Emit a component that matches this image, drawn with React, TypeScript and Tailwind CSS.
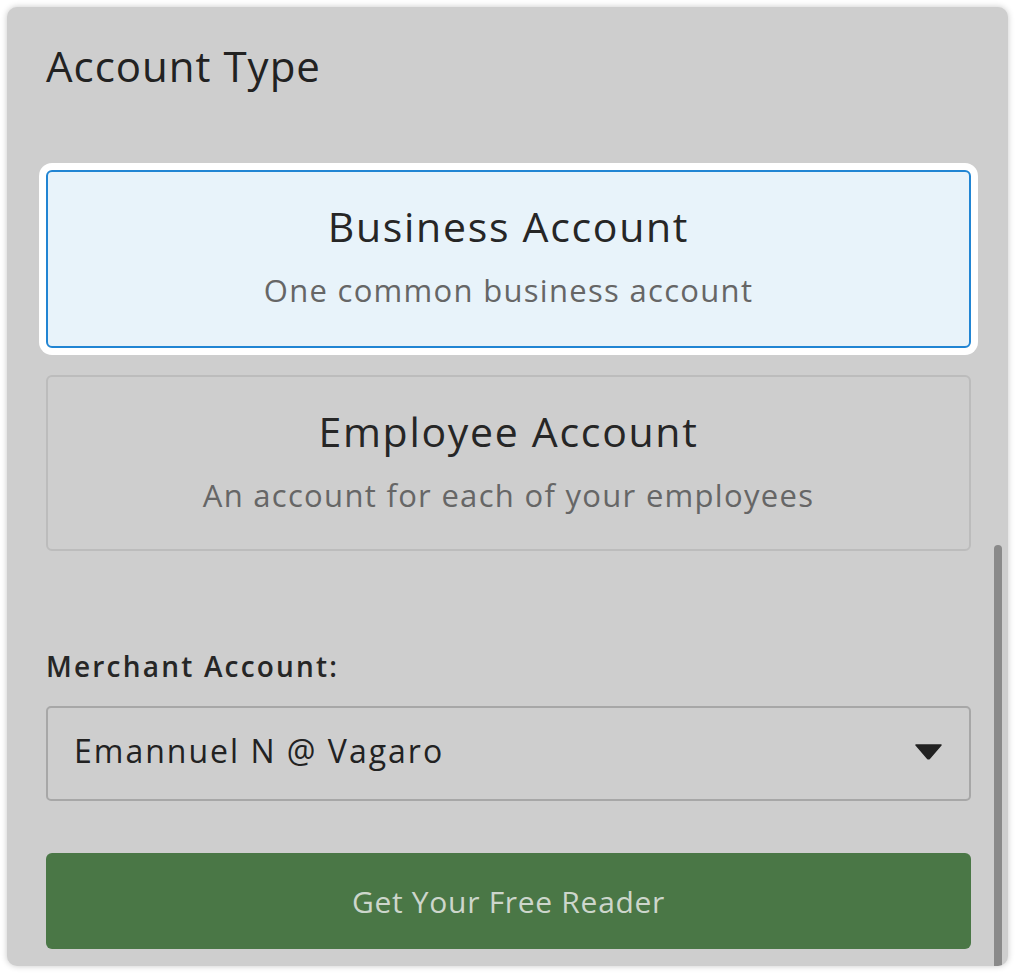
import { useState } from 'react';

const font = { fontFamily: '"Open Sans", Lato, sans-serif' };

type AccountOption = {
  id: string;
  title: string;
  subtitle: string;
};

const options: AccountOption[] = [
  { id: 'business', title: 'Business Account', subtitle: 'One common business account' },
  { id: 'employee', title: 'Employee Account', subtitle: 'An account for each of your employees' },
];

function OptionCard({
  option,
  selected,
  onSelect,
}: {
  option: AccountOption;
  selected: boolean;
  onSelect: () => void;
}) {
  return (
    <button
      onClick={onSelect}
      className={`flex w-full flex-col items-center rounded-[6px] border-2 pt-[29px] text-center ${
        selected
          ? 'h-[178px] border-[#2185d3] bg-[#e8f3fa] shadow-[0_0_0_7px_#ffffff]'
          : 'h-[176px] border-[#bcbcbc] bg-transparent'
      }`}
    >
      <span className="text-[41px] leading-[50px] tracking-[1.7px] text-[#262626]">{option.title}</span>
      <span className="mt-[19px] text-[31px] leading-[40px] tracking-[1.3px] text-[#666666]">
        {option.subtitle}
      </span>
    </button>
  );
}

export default function App() {
  const [selected, setSelected] = useState('business');

  return (
    <div className="min-h-[974px] bg-white p-[7px]" style={font}>
      <div className="relative h-[959px] overflow-hidden rounded-[10px] bg-[#cecece] pl-[39px] pr-[37px] pt-[33px] shadow-[0_0_6px_rgba(0,0,0,0.22)]">
        {/* Header */}
        <h1 className="text-[42px] leading-[52px] tracking-[1px] text-[#222222]">Account Type</h1>

        {/* Account options */}
        <div className="mt-[78px] flex flex-col gap-[27px]">
          {options.map((option) => (
            <OptionCard
              key={option.id}
              option={option}
              selected={selected === option.id}
              onSelect={() => setSelected(option.id)}
            />
          ))}
        </div>

        {/* Merchant select */}
        <label className="mt-[98px] block text-[28px] font-semibold leading-[34px] tracking-[2.2px] text-[#262626]">
          Merchant Account:
        </label>
        <div className="mt-[23px] flex h-[95px] items-center justify-between rounded-[5px] border-2 border-[#a7a7a7] pb-[5px] pl-[26px] pr-[27px]">
          <span className="text-[32px] leading-[40px] tracking-[2px] text-[#222222]">Emannuel N @ Vagaro</span>
          <svg width="27" height="16" viewBox="0 0 27 16" className="mt-[2px]">
            <path d="M1 1 H26 L14.6 14.2 Q13.5 15.4 12.4 14.2 Z" fill="#222222" stroke="#222222" strokeLinejoin="round" strokeWidth="1.5" />
          </svg>
        </div>

        {/* CTA */}
        <button className="mt-[52px] flex h-[96px] w-full items-center justify-center rounded-[6px] bg-[#4a7746] text-[30px] tracking-[0.7px] text-[#cdd6cc]">
          Get Your Free Reader
        </button>

        {/* Scrollbar thumb */}
        <div className="absolute right-[6px] top-[538px] h-[430px] w-[8px] rounded-t-full bg-[#8a8a8a]" />
      </div>
    </div>
  );
}
